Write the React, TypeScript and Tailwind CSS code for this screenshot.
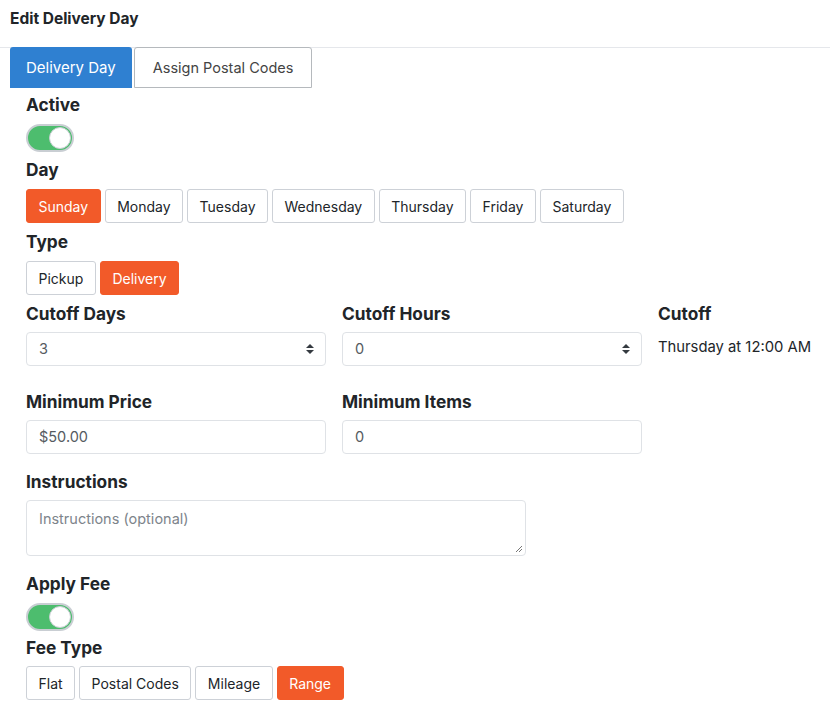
import React from "react";

const font = { fontFamily: "Inter, 'Noto Sans', sans-serif" };

function Toggle() {
  return (
    <div className="w-[48px] h-[28px] rounded-full bg-[#4dbd6e] border-2 border-[#c9ced3] flex items-center justify-end pr-[1px]">
      <div className="w-[22px] h-[22px] rounded-full bg-white border border-[#c9ced3]" />
    </div>
  );
}

function Seg({ items, active }: { items: string[]; active: string }) {
  return (
    <div className="flex gap-[4px]">
      {items.map((it) =>
        it === active ? (
          <div
            key={it}
            className="h-[34px] px-[11.5px] flex items-center rounded-[3px] bg-[#f25a29] border border-[#f25a29] text-white text-[14px]"
          >
            {it}
          </div>
        ) : (
          <div
            key={it}
            className="h-[34px] px-[11.5px] flex items-center rounded-[3px] bg-white border border-[#cdd1d7] text-[#212529] text-[14px]"
          >
            {it}
          </div>
        )
      )}
    </div>
  );
}

function Arrows() {
  return (
    <svg width="10" height="14" viewBox="0 0 10 14">
      <path d="M1 6 L5 2 L9 6 Z" fill="#343a40" />
      <path d="M1 8 L5 12 L9 8 Z" fill="#343a40" />
    </svg>
  );
}

export default function App() {
  const label = "block text-[17.3px] leading-[24px] font-bold text-[#212529]";
  return (
    <div style={font} className="w-[830px] h-[706px] bg-white overflow-hidden">
      <div className="h-[48px] border-b border-[#e5e7eb] px-[10px] flex items-center pb-[9px]">
        <span className="text-[15.5px] font-bold text-[#212529]">Edit Delivery Day</span>
      </div>
      <div className="flex gap-[2px] px-[10px] mt-[-1px]">
        <div className="h-[41px] px-[16px] pt-[1px] flex items-center bg-[#2f80d1] text-white text-[15px] rounded-t-[3px]">
          Delivery Day
        </div>
        <div className="h-[41px] px-[18px] pt-[1px] flex items-center bg-white border border-[#b5b9bd] text-[#444] text-[14.5px] rounded-t-[3px]">
          Assign Postal Codes
        </div>
      </div>
      <div className="pl-[26px]">
        <span className={label + " mt-[5px]"}>Active</span>
        <div className="mt-[7px]">
          <Toggle />
        </div>
        <span className={label + " mt-[6px]"}>Day</span>
        <div className="mt-[7px]">
          <Seg
            items={["Sunday", "Monday", "Tuesday", "Wednesday", "Thursday", "Friday", "Saturday"]}
            active="Sunday"
          />
        </div>
        <span className={label + " mt-[7px]"}>Type</span>
        <div className="mt-[7px]">
          <Seg items={["Pickup", "Delivery"]} active="Delivery" />
        </div>
        <div className="grid grid-cols-[300px_300px_1fr] gap-x-[16px] mt-[7px]">
          <div>
            <span className={label}>Cutoff Days</span>
            <div className="mt-[6px] h-[34px] border border-[#dfe2e6] rounded-[4px] flex items-center justify-between pl-[12px] pr-[10px] text-[14.5px] text-[#555b61]">
              <span>3</span>
              <Arrows />
            </div>
          </div>
          <div>
            <span className={label}>Cutoff Hours</span>
            <div className="mt-[6px] h-[34px] border border-[#dfe2e6] rounded-[4px] flex items-center justify-between pl-[12px] pr-[10px] text-[14.5px] text-[#555b61]">
              <span>0</span>
              <Arrows />
            </div>
          </div>
          <div>
            <span className={label}>Cutoff</span>
            <div className="mt-[6px] h-[30px] flex items-center whitespace-nowrap text-[14.8px] text-[#212529]">
              Thursday at 12:00 AM
            </div>
          </div>
          <div className="mt-[24px]">
            <span className={label}>Minimum Price</span>
            <div className="mt-[6px] h-[34px] border border-[#dfe2e6] rounded-[4px] flex items-center pl-[12px] text-[14.5px] text-[#555b61]">
              $50.00
            </div>
          </div>
          <div className="mt-[24px]">
            <span className={label}>Minimum Items</span>
            <div className="mt-[6px] h-[34px] border border-[#dfe2e6] rounded-[4px] flex items-center pl-[12px] text-[14.5px] text-[#555b61]">
              0
            </div>
          </div>
          <div />
        </div>
        <span className={label + " mt-[16px]"}>Instructions</span>
        <div className="relative mt-[6px] w-[500px] h-[56px] border border-[#dfe2e6] rounded-[4px] pl-[12px] pt-[7px] text-[14.5px] text-[#7d848b]">
          Instructions (optional)
          <svg className="absolute right-[2px] bottom-[2px]" width="8" height="8" viewBox="0 0 8 8">
            <path d="M7 1 L1 7 M7 4 L4 7" stroke="#777" strokeWidth="1" />
          </svg>
        </div>
        <span className={label + " mt-[16px]"}>Apply Fee</span>
        <div className="mt-[7px]">
          <Toggle />
        </div>
        <span className={label + " mt-[5px]"}>Fee Type</span>
        <div className="mt-[6px]">
          <Seg items={["Flat", "Postal Codes", "Mileage", "Range"]} active="Range" />
        </div>
      </div>
    </div>
  );
}
